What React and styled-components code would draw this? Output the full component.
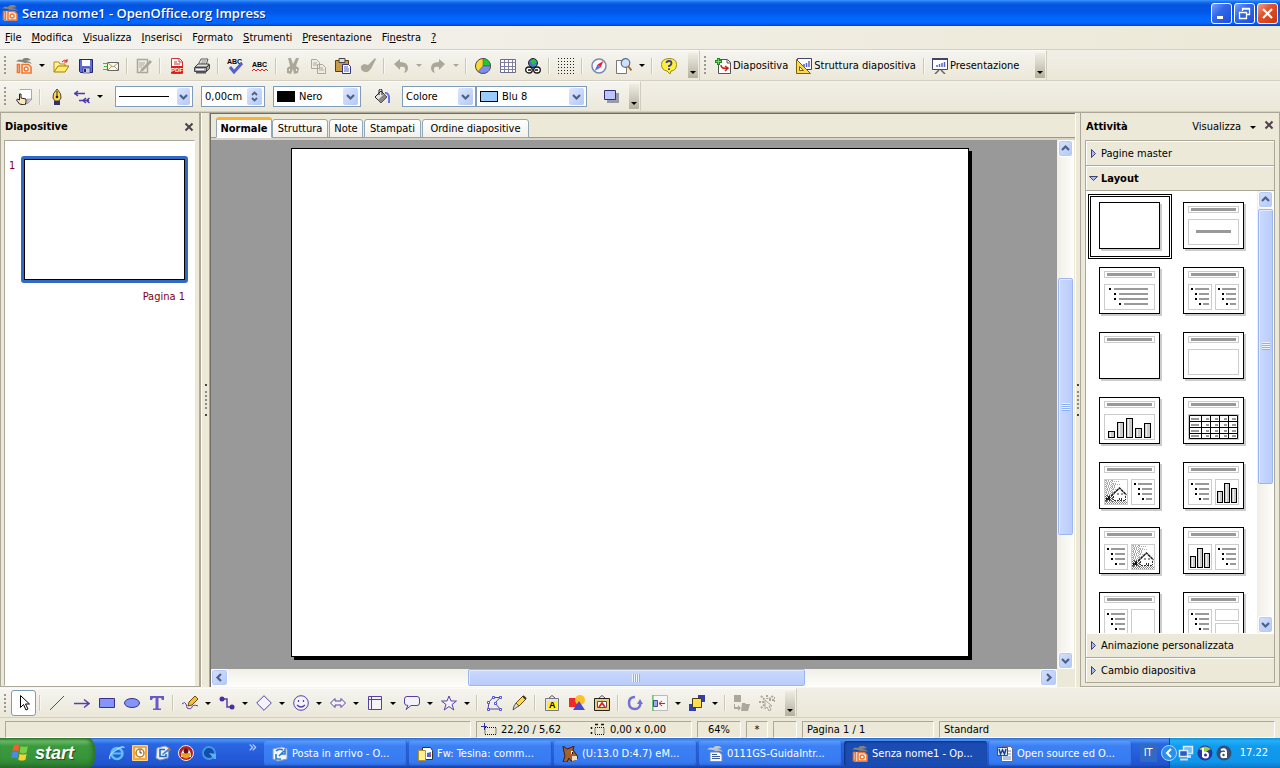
import React from "react";
import styled, { createGlobalStyle, css } from "styled-components";

const GlobalStyle = createGlobalStyle`
  *, *::before {
    box-sizing: border-box;
  }

  body {
    margin: 0;
    overflow: hidden;
    background: #ece9d8;
    color: #000;
    font-family: "DejaVu Sans Condensed", "Noto Sans", sans-serif;
    font-size: 11px;
    line-height: 14px;
  }

  button, input, select {
    margin: 0;
    padding: 0;
    border: 0;
    background: none;
    color: inherit;
    font: inherit;
  }

  svg {
    display: block;
    flex: none;
  }
`

const Window = styled.div`
  display: flex;
  flex-direction: column;
  height: 100vh;
  white-space: nowrap;
`

/* title bar */

const TitleBar = styled.header`
  display: flex;
  align-items: center;
  flex: none;
  height: 26px;
  padding: 0 2px;
  gap: 4px;
  background: linear-gradient(#3d95ff 0, #1a6ef0 2px, #0453dd 5px, #0257ea 12px, #0267ff 18px, #0268ff 23px, #0040d0 26px);
`

const Title = styled.h1`
  flex: 1;
  margin: 0;
  color: #fff;
  font-family: "Open Sans", sans-serif;
  font-size: 13px;
  font-weight: 600;
  line-height: 20px;
  text-shadow: 1px 1px 0 #0a2f8c;
`

const WindowButton = styled.button`
  display: grid;
  place-items: center;
  width: 21px;
  height: 21px;
  margin-left: -2px;
  border: 1px solid #fff;
  border-radius: 3px;
  background: ${p => p.$close
    ? "linear-gradient(135deg, #f0a088, #e0532c 40%, #c83810)"
    : "linear-gradient(135deg, #7ba2f5, #3468e8 40%, #1c4ddc)"};
`

/* menu */

const MenuBar = styled.nav`
  display: flex;
  align-items: center;
  flex: none;
  height: 24px;
  padding-top: 1px;
  border-bottom: 1px solid #d3cfc2;
  background: linear-gradient(90deg, #f3f2ee, #ede9d8);
`

const MenuItem = styled.a`
  padding: 0 5px;
  color: #000;
  text-decoration: none;

  u {
    text-underline-offset: 1px;
  }
`

/* toolbars */

const ToolbarRow = styled.div`
  display: flex;
  flex: none;
  height: ${p => p.$height || 31}px;
  border-bottom: 1px solid #d3cfc2;
  background: linear-gradient(#f1efe6, #ebe8d8);
`

const Toolbar = styled.div`
  display: flex;
  align-items: center;
  padding-right: 1px;
  border-right: 1px solid #d0ccbe;
  border-top: 1px solid #fbfaf7;
  background: linear-gradient(#f5f4ef, #ebe8d9);
`

const Grip = styled.span`
  width: 2px;
  height: 19px;
  margin: 0 5px 0 4px;
  background: repeating-linear-gradient(#9c998c 0 2px, transparent 2px 4px);
`

const ToolButton = styled.button`
  display: flex;
  align-items: center;
  justify-content: center;
  width: 25px;
  height: 26px;

  ${p => p.$pressed && css`
    border: 1px solid #7f9db9;
    border-radius: 3px;
    background: #fff;
  `}
`

const TextButton = styled(ToolButton)`
  width: auto;
  gap: 2px;
  padding: 0 4px;
`

const Arrow = styled.button`
  display: grid;
  place-items: center;
  width: 12px;
  height: 20px;

  &::before {
    content: "";
    border: 3px solid transparent;
    border-top-color: ${p => p.disabled ? "#aca899" : "#000"};
    border-bottom: 0;
  }
`

const Separator = styled.span`
  width: 2px;
  height: 16px;
  margin: 0 3px;
  border-left: 1px solid #cbc7b6;
  border-right: 1px solid #f8f7f2;
`

const ToolGap = styled.span`
  width: ${p => p.$width}px;
`

const Overflow = styled.button`
  display: flex;
  align-items: flex-end;
  justify-content: center;
  width: 10px;
  height: 25px;
  padding-bottom: 4px;
  margin-left: ${p => p.$gap || 6}px;
  background: linear-gradient(#efede2, #b4b1a0);

  &::before {
    content: "";
    border: 3px solid transparent;
    border-top-color: #000;
    border-bottom: 0;
  }
`

const Combo = styled.div`
  display: flex;
  align-items: center;
  width: ${p => p.$width}px;
  height: 21px;
  margin-left: ${p => p.$gap || 0}px;
  padding: 0 2px 0 3px;
  gap: 4px;
  border: 1px solid #7f9db9;
  background: #fff;

  select, input {
    flex: 1;
    min-width: 0;
    width: 0;
    appearance: none;
    outline: 0;
  }
`

const Swatch = styled.span`
  width: 18px;
  height: 11px;
  border: 1px solid #000;
  background: ${p => p.$color};
`

const StrokeSample = styled.span`
  width: 56px;
  height: 1px;
  background: #000;
`

const DropGlyph = styled.span`
  display: grid;
  place-items: center;
  width: 15px;
  height: 17px;
  border-radius: 2px;
  background: linear-gradient(135deg, #dce6fd, #b4c8f6);
`

/* document area */

const Main = styled.main`
  display: flex;
  flex: 1;
  min-height: 0;
  border-top: 1px solid #aca899;
  border-bottom: 1px solid #f6f5ee;
`

const SlidesPanel = styled.aside`
  display: flex;
  flex-direction: column;
  flex: none;
  width: 201px;
  padding: 0 4px 0 3px;
  border: 1px solid #aca899;
  border-width: 0 2px 1px 1px;
`

const PanelHeader = styled.div`
  display: flex;
  align-items: center;
  flex: none;
  height: 27px;
  padding: 1px 1px 0;
`

const PanelTitle = styled.h2`
  flex: 1;
  margin: 0;
  font-size: 11px;
  font-weight: bold;
  line-height: 14px;
`

const SlideList = styled.div`
  display: flex;
  flex: 1;
  align-items: flex-start;
  gap: 5px;
  padding: 15px 6px 0 4px;
  border: 1px solid #aca899;
  border-right-color: #fff;
  border-bottom-color: #fff;
  background: #fff;
  color: #800020;
`

const SlideNumber = styled.span`
  width: 7px;
  padding-top: 3px;
`

const SlideFigure = styled.figure`
  flex: 1;
  margin: 0;
  text-align: right;

  figcaption {
    padding: 7px 3px 0;
  }
`

const SlideThumb = styled.div`
  aspect-ratio: 168 / 128;
  border: 3px solid #316ac5;
  border-radius: 3px;

  &::before {
    content: "";
    display: block;
    height: 100%;
    border: 1px solid #000;
  }
`

const Splitter = styled.div`
  display: flex;
  flex-direction: column;
  align-items: center;
  justify-content: center;
  gap: 2px;
  flex: none;
  width: ${p => p.$width}px;
  border-left: 1px solid #fff;
  border-right: 1px solid #aca899;

  i {
    width: 2px;
    height: 2px;
    background: #8f8c7d;
  }

  i:first-child, i:last-child {
    margin: 3px 0;
    background: #444;
  }
`

const Editor = styled.section`
  display: flex;
  flex-direction: column;
  flex: 1;
  min-width: 0;
  border-left: 1px solid #716f64;
  border-top: 1px solid #716f64;
`

const TabStrip = styled.div`
  display: flex;
  align-items: flex-end;
  flex: none;
  height: 26px;
  padding-left: 5px;
  border-bottom: 2px solid #d8d5c8;
  box-shadow: inset 0 -1px #919b9c;
`

const Tab = styled.button`
  min-width: ${p => p.$width}px;
  height: 19px;
  margin-right: 1px;
  border: 1px solid #91a7b4;
  border-radius: 3px 3px 0 0;
  background: linear-gradient(#fff, #f1f0ea);

  ${p => p.$active && css`
    height: 21px;
    margin-right: 0;
    border-top: 3px solid #f9b52d;
    border-bottom-color: #fcfcfe;
    background: #fcfcfe;
    font-weight: bold;
    line-height: 13px;
  `}
`

const EditorBody = styled.div`
  display: grid;
  flex: 1;
  min-height: 0;
  grid-template: 1fr 18px / 1fr 18px;
`

const Canvas = styled.div`
  display: flex;
  padding: 8px 88px 12px 80px;
  background: #999;
`

const Slide = styled.div`
  flex: 1;
  border: 1px solid #000;
  background: #fff;
  box-shadow: 3px 3px 0 #000;
`

const ScrollTrack = styled.div`
  display: flex;
  flex-direction: ${p => p.$horizontal ? "row" : "column"};
  flex: none;
  ${p => p.$horizontal ? "height: 18px" : "width: 17px"};
  padding: ${p => p.$horizontal ? "0 0 1px" : "0 1px"};
  background: linear-gradient(${p => p.$horizontal ? "180deg" : "90deg"}, #f0eee6, #fefefb);
`

const ScrollButton = styled.button`
  display: grid;
  place-items: center;
  flex: none;
  width: ${p => p.$wide ? 17 : 15}px;
  height: 17px;
  border: 1px solid #fff;
  border-radius: 3px;
  background: linear-gradient(135deg, #d5e1fd, #b3c8f7);
  box-shadow: inset 0 0 0 1px #b5caf5;
`

const ScrollGap = styled.span`
  flex: ${p => p.$size} 1 0;
`

const ScrollThumb = styled.span`
  display: grid;
  place-items: center;
  flex: ${p => p.$size} 1 0;
  border: 1px solid #9ab5ef;
  border-radius: 2px;
  background: linear-gradient(${p => p.$horizontal ? "180deg" : "90deg"}, #cad8fd, #b9cdfa);
  box-shadow: inset 1px 1px #e3ebfe;

  &::before {
    content: "";
    width: 8px;
    height: 8px;
    background: repeating-linear-gradient(${p => p.$horizontal ? "90deg" : "180deg"}, #eef4fe 0 1px, #8cb0f8 1px 2px);
  }
`

/* task pane */

const TaskPane = styled.aside`
  display: flex;
  flex-direction: column;
  flex: none;
  width: 199px;
  padding: 0 4px 3px;
  border-right: 1px solid #aca899;
  border-bottom: 1px solid #aca899;
`

const PaneMenu = styled.button`
  margin-right: 6px;
`

const PaneClose = styled.div`
  margin-left: 5px;
`

const PaneBody = styled.div`
  display: flex;
  flex-direction: column;
  flex: 1;
  min-height: 0;
  border: 1px solid #aca899;
`

const PaneSection = styled.button`
  display: flex;
  align-items: center;
  gap: 3px;
  flex: none;
  height: 25px;
  padding: 1px 0 0 3px;
  border-bottom: 1px solid #aca899;
  background: #ece9d8;
  box-shadow: inset 1px 1px #fff;
  font-weight: ${p => p.$open ? "bold" : "normal"};

  &:last-child {
    height: 24px;
    border-bottom: 0;
  }
`

const LayoutArea = styled.div`
  display: flex;
  flex: 1;
  min-height: 0;
  background: #fff;
`

const LayoutGrid = styled.div`
  display: grid;
  flex: 1;
  grid-template-columns: 84px 84px;
  grid-auto-rows: 65px;
  align-content: start;
  padding: 3px 0 0 2px;
  overflow: hidden;
`

const LayoutButton = styled.button`
  display: grid;
  place-items: center;
  ${p => p.$selected && css`
    border: 3px double #000;
  `}
`

/* status bar */

const StatusBar = styled.footer`
  display: flex;
  flex: none;
  gap: 5px;
  height: 20px;
  padding: 3px 5px 0;
`

const StatusCell = styled.div`
  display: flex;
  align-items: center;
  justify-content: ${p => p.$center ? "center" : "flex-start"};
  flex: ${p => p.$grow || 0} 1 ${p => p.$width}px;
  gap: 4px;
  padding-left: ${p => p.$center ? 0 : 4}px;
  border: 1px solid #aca899;
  border-right-color: #fff;
  border-bottom-color: #fff;
`

const StatusGap = styled.span`
  flex: 1;
`

/* taskbar */

const Taskbar = styled.div`
  display: flex;
  flex: none;
  height: 30px;
  background: linear-gradient(#2a63cc 0, #4a93f4 2px, #2a66e2 6px, #2459d8 20px, #2156cf 26px, #1941a5 30px);
  color: #fff;
`

const StartButton = styled.button`
  display: flex;
  align-items: center;
  width: 96px;
  padding: 0 0 1px 10px;
  gap: 6px;
  border-radius: 0 8px 8px 0 / 0 15px 15px 0;
  background: linear-gradient(#2f7a32 0, #6cbb66 3px, #3c9a3e 8px, #38943a 20px, #2f8433 26px, #246a28 30px);
  box-shadow: inset -3px 0 4px #2b6f2e;
  font-family: "Liberation Sans", sans-serif;
  font-size: 18px;
  font-style: italic;
  font-weight: bold;
  line-height: 20px;
  text-shadow: 1px 1px 1px #1c4c1e;
`

const QuickLaunch = styled.div`
  display: flex;
  align-items: center;
  gap: 7px;
  width: 168px;
  padding: 0 7px 0 13px;
`

const More = styled.button`
  align-self: flex-start;
  flex: 1;
  padding-top: 2px;
  color: #bcd4ff;
  font-size: 16px;
  text-align: right;
`

const Tasks = styled.div`
  display: flex;
  flex: 1;
  gap: 2px;
  padding: 3px 0 2px;
`

const Task = styled.button`
  display: flex;
  align-items: center;
  flex: 0 1 143px;
  min-width: 0;
  padding: 0 12px 0 8px;
  gap: 4px;
  border-radius: 3px;
  background: ${p => p.$active ? "#1b4cb2" : "linear-gradient(#5a9bfb, #3c80f4 5px, #377bf2 20px, #2f6ce0)"};
  box-shadow: ${p => p.$active ? "inset 1px 1px 2px #102f78" : "inset -1px -1px 1px #2558c4"};

  span {
    overflow: hidden;
    text-overflow: ellipsis;
  }
`

const Language = styled.span`
  display: grid;
  place-items: center;
  align-self: center;
  width: 17px;
  height: 18px;
  margin-right: 4px;
  background: #316ac5;
`

const TrayToggle = styled.button`
  align-self: center;
  z-index: 1;
  margin-right: -8px;
`

const Tray = styled.div`
  display: flex;
  align-items: center;
  flex: none;
  gap: 3px;
  padding: 0 12px 0 8px;
  border-left: 1px solid #1042af;
  background: linear-gradient(#1290d8 0, #22b0f8 3px, #119bee 8px, #0f95ea 24px, #0f74c4 30px);
`

const Clock = styled.time`
  margin-left: 5px;
`

const P = "#5a3ea8";
const GREY = "#aca899";

const ICONS = {
  impress: <>
    <path d="M2 6h9l4 3v6.500H2z" fill="#fff4ea" />
    <path d="M0 3.500q3-3 6-1.500 2-3 6-2l3 2-5 1q4 0 6 3-4-2-7-1-4-2-9-1.500z" fill="#85827c" />
    <path d="M1.500 6.500h2v8h-2zM6 6.500h6.500l2.500 2.500v6H6z" fill="none" stroke="#ee7430" strokeWidth="1.600" />
    <ellipse cx="10.200" cy="11" rx="2" ry="2" fill="#fff" stroke="#ee7430" strokeWidth="1.400" />
  </>,
  open: <>
    <path d="M1 14V4h5l1 2h5v3" fill="#fff2a0" stroke="#b98c10" />
    <path d="M1 14l4-6h11l-4 6z" fill="#ffec70" stroke="#a67c08" />
    <path d="M9 4q2-3 5-1M14 1v3h-3" fill="none" stroke="#d02020" />
  </>,
  save: <>
    <path d="M1.500 1.500h13v13h-12l-1-1z" fill="#6070d8" stroke="#25256a" />
    <path d="M4 2h8v6H4z" fill="#fff" />
    <path d="M5 10h7v5H5z" fill="#c8cce8" stroke="#25256a" strokeWidth=".6" />
    <path d="M6 11h2v3H6z" fill="#25256a" />
  </>,
  mail: <>
    <path d="M4.500 4.500h11v8h-11z" fill="#fffbd8" stroke="#666" />
    <path d="M5 5l5 4 5-4M5 12l4-4M15 12l-4-4" fill="none" stroke="#888" strokeWidth=".8" />
    <path d="M0 5.500h5M1 8.500h4M0 11.500h4" stroke="#30c030" />
  </>,
  edit: <>
    <path d="M1.500 1.500h10v13h-10z" fill="#eeece2" stroke={GREY} strokeWidth="1.500" />
    <path d="M3 5h6M3 7h5M3 9h3" stroke={GREY} />
    <path d="M14 2l2 2-9 9-3 1 1-3z" fill={GREY} />
  </>,
  pdf: <>
    <path d="M2.500.5h8l3 3v12h-11z" fill="#fff" stroke="#c33" />
    <path d="M10 1v3h3M5 4h3M5 6h6" fill="none" stroke="#c33" />
    <path d="M2 8h12v7H2z" fill="#d81e1e" />
    <text x="2" y="14" fontSize="6" fontWeight="bold" fill="#fff" fontFamily="Liberation Sans">PDF</text>
  </>,
  print: <>
    <path d="M4 7l3-6h7l-2 6" fill="#fff" stroke="#555" />
    <path d="M7.500 3h5M6.500 5h5" stroke="#777" />
    <path d="M1 9l3-3h11l-2 3z" fill="#e4e4e4" stroke="#444" />
    <path d="M.5 9.500h12v4H.5zM12.500 9.500l3-3v4l-3 3z" fill="#a8a8ae" stroke="#444" />
    <path d="M2 11.500h8" stroke="#fff" />
    <path d="M2 14.500h10" stroke="#555" strokeWidth="2" />
  </>,
  spell: <>
    <text x="0" y="6" fontSize="7" fontWeight="bold" fontFamily="Liberation Sans">ABC</text>
    <path d="M3 9l4 5 8-9" fill="none" stroke="#5560d0" strokeWidth="3" />
  </>,
  autospell: <>
    <text x="0" y="9" fontSize="7" fontWeight="bold" fontFamily="Liberation Sans">ABC</text>
    <path d="M0 13l2-2 2 2 2-2 2 2 2-2 2 2 2-2 2 2" fill="none" stroke="#e02020" />
  </>,
  cut: <>
    <path d="M3 0l3 0 2 6 3-6 3 0-3 8 3 2-1 5-4 1-1-5-2 5-4-1 0-5 3-2z" fill={GREY} />
    <path d="M4 12h1M11 12h1" stroke="#f2f0e8" strokeWidth="2" />
  </>,
  copy: <>
    <path d="M1.500 1.500h5l3 3v6h-8zM7.500 6.500h5l3 3v6h-8z" fill="#efede3" stroke={GREY} />
    <path d="M3 5h4M3 7h4M9 10h4M9 12h5" stroke={GREY} />
  </>,
  paste: <>
    <path d="M.5 2.500h13v11H.5z" fill="#c99a40" stroke="#5b3c0a" />
    <path d="M4 .5h6v4H4z" fill="#ddd" stroke="#444" />
    <path d="M7.500 6.500h6l2 2v7h-8z" fill="#fff" stroke="#35357a" />
    <path d="M9 9h4M9 11h5M9 13h5" stroke="#5560c0" />
  </>,
  brush: <path d="M15 0l1 1-4 8q-3 6-7 5-5-1-4-6l3-2 4 1z" fill={GREY} />,
  undo: <path d="M1 6l6-5v3q8 0 8 6 0 4-4 5 2-3 1-5-1-2-5-1v3z" fill={GREY} />,
  redo: <path d="M15 6L9 1v3Q1 4 1 10q0 4 4 5-2-3-1-5 1-2 5-1v3z" fill={GREY} />,
  chart: <>
    <circle cx="8" cy="8" r="7.500" fill="#ffd830" stroke="#444" />
    <path d="M8 8V.5A7.500 7.500 0 0 1 15.500 8z" fill="#20c838" stroke="#444" strokeWidth=".5" />
    <path d="M8 8h7.500A7.500 7.500 0 0 1 3 13.500z" fill="#7d8cf0" stroke="#444" strokeWidth=".5" />
  </>,
  table: <>
    <path d="M.5 1.500h15v13H.5z" fill="#fff" stroke="#6a6a8c" />
    <path d="M0 4.500h16M0 8.500h16M0 11.500h16M4.500 2v12M8.500 2v12M12.500 2v12" stroke="#8080a0" />
  </>,
  link: <>
    <circle cx="8" cy="5" r="4.500" fill="#4a6ae0" stroke="#222" />
    <path d="M5 3l4-2 3 3-4 3zM8 7l3-1v2z" fill="#20c838" />
    <ellipse cx="4" cy="12" rx="3.300" ry="3" fill="#fff" stroke="#111" strokeWidth="1.300" />
    <ellipse cx="12" cy="12" rx="3.300" ry="3" fill="#fff" stroke="#111" strokeWidth="1.300" />
    <path d="M3 12h3M10 12h3" stroke="#111" strokeWidth="1.500" />
  </>,
  grid: <>
    {[0, 3, 6, 9, 12, 15].map(y => (
      <path key={y} d={`M0 ${y + 0.5}h16`} stroke="#222" strokeDasharray="1 2" />
    ))}
  </>,
  compass: <>
    <circle cx="8" cy="8" r="7" fill="#f6f8ff" stroke="#7e88a8" strokeWidth="1.500" />
    <path d="M12.500 3L9.500 9.500l-3-3z" fill="#f02020" />
    <path d="M3.500 13l3-6.500 3 3z" fill="#5a6ee0" />
  </>,
  zoom: <>
    <path d="M.5 2.500h8l2 2v11H.5z" fill="#fff" stroke="#777" />
    <circle cx="9.500" cy="5" r="4.300" fill="#c9e1fb" stroke="#5a6a98" strokeWidth="1.200" />
    <path d="M12 8l3.500 4.500" stroke="#a86a20" strokeWidth="2" />
  </>,
  help: <>
    <path d="M8 .5q7.500 0 7.500 6T10 13l-1 3-3-3Q.5 12 .5 6.500T8 .5z" fill="#fff03a" stroke="#998a20" />
    <path d="M5.500 5q0-2 2.500-2t2.500 2T8 8v1M8 10.200v1.800" fill="none" stroke="#3a3aa0" strokeWidth="1.800" />
  </>,
  newSlide: <>
    <path d="M3.500 1.500h9l3 3v11h-12z" fill="#fff" stroke="#555" />
    <path d="M12 2v3h3" fill="none" stroke="#555" />
    <path d="M6 7q0 4 6 3M10 8l3 2-3 3" fill="none" stroke="#d01c1c" strokeWidth="1.500" />
    <path d="M0 3.500h7M3.500 0v7" stroke="#208a20" strokeWidth="3" />
    <path d="M1 3.500h5M3.500 1v5" stroke="#60e060" />
  </>,
  design: <>
    <path d="M1.500.5h14v11h-14z" fill="#fff" stroke="#44446a" />
    <path d="M8 9V6M10.500 9V5M13 9V3" stroke="#5960d8" strokeWidth="1.500" />
    <path d="M.5 1.500v14h14z" fill="#ffd84a" stroke="#7a6010" />
    <path d="M3.500 8.500v4h4z" fill="#fff" stroke="#7a6010" />
  </>,
  present: <>
    <path d="M.5.5h15v11H.5z" fill="#fff" stroke="#44446a" />
    <path d="M0 1h16" stroke="#44446a" strokeWidth="2" />
    <path d="M5 9V7M7.500 9V6M10 9V5M12.500 9V4" stroke="#5960d8" strokeWidth="1.500" />
    <path d="M7 12l-4 4M9 12l4 4" stroke="#666" strokeWidth="1.500" />
  </>,
  hand: <>
    <path d="M3.500.5h12v10l-4 4h-6" fill="#fff" stroke="#aaa" />
    <path d="M11 15v-5h5z" fill="#ccc" stroke="#888" strokeWidth=".6" />
    <path d="M3.500 15l-3-4 1-1 2 1V5h1.500v4l5 1v3l-1 3z" fill="#ffe8c0" stroke="#222" />
  </>,
  pen: <>
    <path d="M8 0q5 5 4 9l-2 3H6L4 9Q3 5 8 0z" fill="#ffd84a" stroke="#444" />
    <path d="M8 2v6" stroke="#222" />
    <circle cx="8" cy="8" r="1.300" fill="#222" />
    <path d="M5 12h6v4H5z" fill="#30306a" />
  </>,
  lineEnds: <path d="M0 4.500h11M4 2L1 4.500 4 7M5 11.500h10M12 9l-3 2.500 3 2.500M15.500 9l-3 2.500 3 2.500" fill="none" stroke="#4a3aa8" strokeWidth="1.500" />,
  bucket: <>
    <path d="M1 8l6-6 6 6-6 6z" fill="#e4e4e6" stroke="#222" />
    <path d="M4 11l6-6 3 3-6 6z" fill="#888" />
    <path d="M5 6V1q2-2 3 0v5" fill="none" stroke="#222" />
    <path d="M11 4q5-1 4 10" fill="none" stroke="#6070f0" strokeWidth="2" />
  </>,
  shadow: <>
    <path d="M4 4h12v10H4z" fill="#9a9aa6" />
    <path d="M1.500 1.500h11v9h-11z" fill="#bcc6fa" stroke="#30307a" />
  </>,
  pointer: <path d="M4.500.5v12l3-3 2.500 5.500 2-1-2.500-5h4z" fill="#fff" stroke="#000" />,
  line: <path d="M1 15L15 1" stroke={P} />,
  arrow: <path d="M0 8.500h14M10 4.500l5 4-5 4" fill="none" stroke={P} strokeWidth="1.500" />,
  rect: <path d="M.5 3.500h15v9H.5z" fill="#8495f8" stroke="#3e2c90" />,
  ellipse: <ellipse cx="8" cy="8" rx="7.500" ry="4.500" fill="#8495f8" stroke="#3e2c90" />,
  text: <path d="M1 1h14v4h-2l-1-2H9.500v10.500H12V15H4v-1.500h2.500V3H4L3 5H1z" fill="#6a5ac8" />,
  curve: <>
    <path d="M0 9q3-3 4 0t1 4q4 2 5-1t6-1" fill="none" stroke={P} />
    <path d="M6 11l1-4 6-6 3 3-6 6z" fill="#f6c03a" stroke="#6a4a10" />
  </>,
  connector: <>
    <path d="M3 4h5v8h5" fill="none" stroke={P} strokeWidth="1.500" />
    <circle cx="3" cy="4" r="2.500" fill="#4a2e9e" />
    <circle cx="13" cy="12" r="2.500" fill="#4a2e9e" />
  </>,
  diamond: <path d="M8 .7L15.300 8 8 15.300.7 8z" fill="#f4f3fa" stroke={P} />,
  smile: <>
    <circle cx="8" cy="8" r="7.300" fill="#f4f3fa" stroke={P} />
    <path d="M5.500 5v2M10.500 5v2M4 10q4 4 8 0" fill="none" stroke={P} strokeWidth="1.200" />
  </>,
  block: <path d="M.5 8L5 3.500v2.500h6V3.500L15.500 8 11 12.500V10H5v2.500z" fill="#f4f3fa" stroke={P} />,
  flow: <path d="M1.500 1.500h13v13h-13zM1 4.500h14M4.500 1v14" fill="#f4f3fa" stroke={P} />,
  callout: <path d="M3 1.500h10q2.500 0 2.500 2.500v4q0 2.500-2.500 2.500H7l-5 4 2-4Q.5 10.500.5 8V4Q.5 1.500 3 1.500z" fill="#f4f3fa" stroke={P} />,
  star: <path d="M8 1l2 5h5.500L11 9.500l1.800 5.500L8 11.500 3.200 15 5 9.500.5 6H6z" fill="#f4f3fa" stroke={P} />,
  points: <>
    <path d="M7 2.500h7L9 8l5 6H2l1-7z" fill="none" stroke={P} />
    {[[6, 1], [13, 1], [8, 7], [13, 13], [1, 13], [1, 6]].map(([x, y]) => (
      <path key={`${x}-${y}`} d={`M${x}.500 ${y}.500h2v2h-2z`} fill="#fff" stroke="#4858e0" />
    ))}
  </>,
  glue: <>
    <path d="M5 8l7-7 3 3-7 7z" fill="#ffd84a" stroke="#6a4a10" />
    <path d="M5 8l3 3-2 1-4 3 1-4z" fill="#ddd" stroke="#555" />
    <path d="M12 1l3 3" stroke="#333" strokeWidth="2" />
  </>,
  fontwork: <>
    <path d="M5 3l3-2.500L11 3" fill="none" stroke="#555" />
    <path d="M1.500 3.500h13v12h-13z" fill="#e6e6ea" stroke="#778" />
    <path d="M3 6h10v8H3z" fill="#ffee20" />
    <text x="5" y="13" fontSize="9" fontWeight="bold" fontFamily="Liberation Sans">A</text>
  </>,
  shapes: <>
    <path d="M0 3h9v9H0z" fill="#f02828" />
    <circle cx="11" cy="5" r="5" fill="#ffbf28" />
    <path d="M10 6l6 9H4z" fill="#4a4ac8" />
  </>,
  picture: <>
    <path d="M5 3l3-2.500L11 3" fill="none" stroke="#555" />
    <path d="M.5 3.500h15v12H.5z" fill="#e8d080" stroke="#222" />
    <path d="M3.500 6.500h9v6h-9z" fill="#fff" stroke="#555" />
    <path d="M5 12l3-4 3 4" fill="none" stroke="#e02020" strokeWidth="1.800" />
  </>,
  rotate: <>
    <path d="M8 2Q2 2 2 8t6 6q5 0 5.500-6" fill="none" stroke="#7470d4" strokeWidth="2.500" />
    <path d="M10 9l3-5 3 5z" fill="#7470d4" />
  </>,
  align: <>
    <path d="M.5.5h15v15H.5z" fill="#f6f6f4" stroke="#bbb" />
    <path d="M1 0v16" stroke="#20d030" />
    <path d="M1.500 5.500h4v6h-4z" fill="#9aa8f8" stroke="#444a90" />
    <path d="M7 8.500h6M10 6L7 8.500 10 11" fill="none" stroke="#d02020" />
  </>,
  arrange: <>
    <path d="M9 0h7v7H9zM0 9h7v7H0z" fill="#3040b0" />
    <path d="M3.500 3.500h9v9h-9z" fill="#ffdf50" stroke="#4a3a10" />
  </>,
  extrude: <path d="M0 0h7v7H0zM8 8h3l1 1h4l-2 7H7zM1 9v3h3v-2l3 3-3 3v-2H0V9z" fill={GREY} />,
  interact: <>
    <path d="M8 0v4M2 1l4 4M14 1l-4 3M0 7h5M2 13l4-4M10 5h6M16 2v6" stroke={GREY} strokeWidth="2" strokeDasharray="2 1" />
    <path d="M6 5l7 6H10l2 4-2 1-2-4-2 2z" fill="#f0eee4" stroke={GREY} />
  </>,
  posDim: <>
    <path d="M0 4.500h6M3.500 1v7" stroke="#3535a0" />
    <path d="M4 5.500h11v7H4z" fill="none" stroke="#111" strokeDasharray="1 1" />
  </>,
  sizeDim: <>
    <path d="M5 5.500h9v7H5z" fill="none" stroke="#111" strokeDasharray="1 1" />
    <path d="M5 2.500h3M11 2.500h3M1.500 5v2M1.500 10v2" stroke="#111" strokeWidth="1.500" />
  </>,
  windows: <>
    <path d="M3 2q3-2 5 0L7 7Q4 5.500 2 7z" fill="#f0602a" />
    <path d="M9 2.500q3 1.500 6 0L14 8q-3 1.500-6 0z" fill="#7bd040" />
    <path d="M2 8q2-1.500 5 0l-1 5q-3-1.500-5 0z" fill="#4a8af0" />
    <path d="M8 9q3 1.500 6 0l-1 5q-3 1.500-6 0z" fill="#fbd030" />
  </>,
  ie: <>
    <circle cx="8" cy="8.500" r="5.500" fill="none" stroke="#5cc0fa" strokeWidth="2.500" />
    <path d="M4 8.500h9" stroke="#5cc0fa" strokeWidth="2" />
    <path d="M1 14q-2-4 6-9t8-2" fill="none" stroke="#a6def8" strokeWidth="1.300" />
  </>,
  outlook: <>
    <path d="M.5.5h15v15H.5z" fill="#f6a83a" stroke="#ffd898" />
    <path d="M3 3h10v10H3z" fill="#fff5dc" />
    <circle cx="8" cy="8" r="4" fill="#fff" stroke="#c07818" strokeWidth="1.500" />
    <path d="M8 5v3h2" fill="none" stroke="#604010" />
  </>,
  desktop: <>
    <path d="M2 3l8-2 4 2-1 10-8 2-4-2z" fill="#e6f0fc" stroke="#8898b8" />
    <path d="M10 4.500H5v7h6V9" fill="none" stroke="#2468b8" strokeWidth="1.600" />
    <path d="M7 9l1 1 7-5-1-2z" fill="#3a86d8" />
    <path d="M13 3l3 1-1 2-2-1z" fill="#e86820" />
  </>,
  messenger: <>
    <circle cx="8" cy="8" r="7.500" fill="#b82020" stroke="#eee" />
    <path d="M3 12q0-8 5-8t5 8z" fill="#fff" />
    <path d="M3 10q5 7 10 0l-1-2H4z" fill="#f0a020" />
    <circle cx="8" cy="6" r="2.500" fill="#5a1818" />
  </>,
  quicktime: <>
    <circle cx="8" cy="8" r="6" fill="#144ca8" stroke="#3f98e8" strokeWidth="1.800" />
    <path d="M8 8l5 6h2V9z" fill="#5cb0f8" />
  </>,
  outbox: <>
    <path d="M1 3l9-2 5 2v10l-9 2-5-2z" fill="#f4f6fc" stroke="#8aa0c0" />
    <path d="M4 5q3-3 7-1M13 3v5H9M12 5l-5 5M4 8v5h5" fill="none" stroke="#2a7ad0" strokeWidth="1.600" />
  </>,
  letter: <>
    <path d="M5.500 1.500h8l2 3v9h-10z" fill="#fff" stroke="#333" />
    <path d="M1.500 4.500h7v10h-7z" fill="#fff19a" stroke="#b8901a" />
    <path d="M10 7l4-1v5h-4z" fill="#4068d8" />
    <path d="M12 7h2v2h-2z" fill="#e05030" />
  </>,
  mule: <>
    <path d="M1 0l4 3 3-1 4-2-1 4 3 4 2 3-2 3-5 1-2-3-2 4H1l2-6-1-4z" fill="#a8602a" stroke="#3c1e0a" />
    <path d="M10 10l5 0 0 4-5 1z" fill="#f0dcc0" />
    <path d="M9 5h2v3H9z" fill="#fff" />
    <path d="M10 6h1v2h-1z" fill="#111" />
  </>,
  writer: <>
    <path d="M3 6h9l3 2.500V15.500H3z" fill="#f5f8ff" stroke="#7a8aaa" />
    <path d="M0 3.500q3-3 6-1.500 2-3 6-2l3 2-5 1q4 0 6 3-4-2-7-1-4-2-9-1.500z" fill="#c4c6c8" />
    <path d="M5 8.500h5M5 10.500h8M5 12.500h8" stroke="#3e5c98" />
  </>,
  word: <>
    <path d="M4.500.5h9l2 2v13h-11z" fill="#fff" stroke="#668" />
    <path d="M10 5h4M10 8h4M6 11h8M6 13h8" stroke="#7088b8" />
    <path d="M.5 1.500h10v8H.5z" fill="#dfe9fc" stroke="#2450a0" />
    <path d="M2 3l1.500 5 2-4 2 4L9 3" fill="none" stroke="#16408e" strokeWidth="1.500" />
  </>,
  trayArrow: <>
    <circle cx="8" cy="8" r="7.500" fill="#2a90f0" stroke="#a8d8fc" />
    <path d="M10 4L6 8l4 4" fill="none" stroke="#fff" strokeWidth="2" />
  </>,
  network: <>
    <path d="M5.500 1.500h9v7h-9z" fill="#6ac0f8" stroke="#e0e8f0" strokeWidth="1.500" />
    <path d="M9 10h4v3H9z" fill="#d0d8e0" />
    <path d="M1.500 5.500h8v6h-8z" fill="#2a5ac8" stroke="#e0e8f0" strokeWidth="1.500" />
    <path d="M2 14.500h8" stroke="#d0d8e0" strokeWidth="2" />
  </>,
  bTray: <>
    <circle cx="8" cy="8" r="7.500" fill="#2438a0" />
    <path d="M2 4Q8-1 14 4L8 7z" fill="#9ad040" />
    <path d="M6 3v9" stroke="#fff" strokeWidth="2" />
    <circle cx="8.500" cy="10" r="2.500" fill="none" stroke="#fff" strokeWidth="2" />
  </>,
  aTray: <>
    <circle cx="8" cy="8" r="7.500" fill="#345078" />
    <path d="M5 5q5-2 5 2v6" fill="none" stroke="#fff" strokeWidth="2" />
    <circle cx="7.500" cy="10" r="2.200" fill="none" stroke="#fff" strokeWidth="2" />
  </>,
};

function Icon({ name, size = 16 }) {
  return <svg width={size} height={size} viewBox="0 0 16 16" aria-hidden="true">{ICONS[name]}</svg>
}

const CHEVRONS = {
  up: "M1 6l3.500-3.500L8 6",
  down: "M1 3l3.500 3.500L8 3",
  left: "M6 1L2.500 4.500 6 8",
  right: "M3 1l3.500 3.500L3 8",
};

function Chevron({ dir = "down" }) {
  return (
    <svg width="9" height="9" viewBox="0 0 9 9" aria-hidden="true">
      <path d={CHEVRONS[dir]} fill="none" stroke="#4d6185" strokeWidth="2.200" />
    </svg>
  )
}

function Triangle({ open }) {
  return (
    <svg width="9" height="9" viewBox="0 0 9 9" aria-hidden="true">
      <path d={open ? "M.5 2.500h8l-4 4z" : "M2.500.5v8l4-4z"} fill="#aab8f8" stroke="#404078" />
    </svg>
  )
}

function Close() {
  return (
    <button aria-label="Chiudi">
      <svg width="10" height="10" viewBox="0 0 10 10">
        <path d="M1.500 1.500l7 7M8.500 1.500l-7 7" stroke="#50404e" strokeWidth="2" />
      </svg>
    </button>
  )
}

// "|" is a separator, ":v" adds a drop-down arrow, "!" disables it, ":p" is pressed
function Tools({ items }) {
  return items.split(" ").map((item, i) => {
    if (item === "|") return <Separator key={i} />
    const [name, flags = ""] = item.split(":");
    return (
      <React.Fragment key={i}>
        <ToolButton aria-label={name} $pressed={flags.includes("p")}><Icon name={name} /></ToolButton>
        {flags.includes("v") && <Arrow aria-label={`${name} menu`} disabled={flags.includes("!")} />}
      </React.Fragment>
    )
  })
}

function Scrollbar({ before, thumb, after, horizontal }) {
  return (
    <ScrollTrack $horizontal={horizontal}>
      <ScrollButton $wide={horizontal} aria-label="Indietro"><Chevron dir={horizontal ? "left" : "up"} /></ScrollButton>
      <ScrollGap $size={before} />
      <ScrollThumb $size={thumb} $horizontal={horizontal} />
      <ScrollGap $size={after} />
      <ScrollButton $wide={horizontal} aria-label="Avanti"><Chevron dir={horizontal ? "right" : "down"} /></ScrollButton>
    </ScrollTrack>
  )
}

function Select({ label, value, width, gap, children }) {
  return (
    <Combo $width={width} $gap={gap}>
      {children}
      <select aria-label={label} defaultValue={value}>
        <option>{value}</option>
      </select>
      <DropGlyph><Chevron /></DropGlyph>
    </Combo>
  )
}

/* layout previews, drawn on a 63x49 sheet */

const Frame = ({ x = 5, y = 17, w = 51, h = 26 }) => (
  <rect x={x + 0.5} y={y + 0.5} width={w - 1} height={h - 1} fill="#fff" stroke="#ccc" />
)

const Bullets = ({ x = 5 }) => (
  <>
    <Frame x={x} w={24} />
    {[[3, 21], [7, 26], [7, 31], [11, 36]].map(([dx, y]) => (
      <React.Fragment key={y}>
        <rect x={x + dx} y={y} width="2" height="2" />
        <rect x={x + dx + 4} y={y} width={17 - dx} height="2" fill="#999" />
      </React.Fragment>
    ))}
  </>
)

const Bars = ({ bars, width = 7 }) => bars.map(([x, h]) => (
  <g key={x}>
    <rect x={x + 0.5} y={41.5 - h} width={width - 1} height={h - 1} fill="#ccc" stroke="#000" />
    <path d={`M${x + 2.5} ${42 - h}v${h - 2}`} stroke="#eee" />
  </g>
))

const SmallChart = ({ x }) => (
  <>
    <Frame x={x} w={24} />
    <Bars width={6} bars={[[x + 2, 12], [x + 9, 20], [x + 16, 15]]} />
  </>
)

const House = ({ x }) => (
  <>
    <Frame x={x} w={24} />
    <g transform={`translate(${x} 17)`}>
      {[...Array(22)].map((_, y) => (
        <path
          key={y}
          d={`M${1 + (y % 2)} ${y + 1.5}h${[9, 14, 8, 12, 15, 10, 12, 9][y % 8]}`}
          stroke={y > 14 ? "#666" : "#aaa"}
          strokeDasharray={y % 3 ? "1 1" : "2 1 1 2"}
        />
      ))}
      <path d="M9 22v-6l6.500-6 6.500 6v6z" fill="#fff" />
      <path d="M7 17l8.500-8 7 7" fill="none" stroke="#222" strokeWidth="1.500" strokeDasharray="3 .5" />
      <path d="M9.500 17v4M21.500 17v4M10 21.500h11M15.500 21v-3M17.500 21v-3M13 15h2M17 15h2" fill="none" stroke="#333" strokeDasharray="2 1" />
      <path d="M2 22l1-3 1 2 1-4 1 5" fill="none" stroke="#000" />
      <path d="M1 22.500h22M2 23.500h21M1 24.500h22" stroke="#888" strokeDasharray="1 1" />
    </g>
  </>
)

const LAYOUTS = [
  { name: "Vuota", plain: true },
  { name: "Titolo", body: <><Frame /><rect x="13" y="28" width="35" height="3" fill="#999" /></> },
  {
    name: "Titolo, testo",
    body: <>
      <Frame />
      {[[10, 21], [15, 26], [15, 31], [20, 36]].map(([x, y]) => (
        <React.Fragment key={y}>
          <rect x={x} y={y} width="2" height="2" />
          <rect x={x + 5} y={y} width={44 - x} height="2" fill="#999" />
        </React.Fragment>
      ))}
    </>,
  },
  { name: "Titolo, due testi", body: <><Bullets /><Bullets x={32} /></> },
  { name: "Solo titolo" },
  { name: "Titolo, oggetto", body: <Frame /> },
  { name: "Titolo, diagramma", body: <><Frame /><Bars bars={[[9, 7], [18, 16], [27, 20], [36, 10], [45, 15]]} /></> },
  {
    name: "Titolo, tabella",
    body: <>
      <Frame />
      <path d="M6.500 18.500h48v23h-48zM6 24.500h49M6 30.500h49M6 36.500h49M18.500 18v24M27.500 18v24M36.500 18v24M45.500 18v24" fill="none" stroke="#000" />
      {[21, 27, 33, 38].map(y => (
        <path key={y} d={`M8 ${y + 1}h8M23 ${y + 1}h3M32 ${y + 1}h3M41 ${y + 1}h3M49 ${y + 1}h4`} stroke="#999" strokeWidth="2" />
      ))}
    </>,
  },
  { name: "Titolo, clipart, testo", body: <><House x={5} /><Bullets x={32} /></> },
  { name: "Titolo, testo, diagramma", body: <><Bullets /><SmallChart x={32} /></> },
  { name: "Titolo, testo, clipart", body: <><Bullets /><House x={32} /></> },
  { name: "Titolo, diagramma, testo", body: <><SmallChart x={5} /><Bullets x={32} /></> },
  { name: "Titolo, testo, oggetto", body: <><Bullets /><Frame x={32} w={24} /></> },
  { name: "Titolo, testo, due oggetti", body: <><Bullets /><Frame x={32} w={24} h={12} /><Frame x={32} y={31} w={24} h={12} /></> },
];

function LayoutPreview({ plain, body }) {
  return (
    <svg width="63" height="49" viewBox="0 0 63 49" aria-hidden="true">
      <rect x="2" y="2" width="61" height="47" fill="#ccc" />
      <rect x=".5" y=".5" width="60" height="46" fill="#fff" stroke="#000" />
      {!plain && <><Frame y={4} h={7} /><rect x="8" y="6" width="45" height="3" fill="#999" /></>}
      {body}
    </svg>
  )
}

const MENU = [
  ["", "F", "ile"], ["", "M", "odifica"], ["", "V", "isualizza"], ["", "I", "nserisci"], ["F", "o", "rmato"],
  ["", "S", "trumenti"], ["", "P", "resentazione"], ["Fi", "n", "estra"], ["", "?", ""],
];

const TABS = [["Normale", 56], ["Struttura", 56], ["Note", 34], ["Stampati", 57], ["Ordine diapositive", 107]];

const TASKS = [
  ["outbox", "Posta in arrivo - O..."], ["letter", "Fw: Tesina: comm..."], ["mule", "(U:13.0 D:4.7) eM..."],
  ["writer", "0111GS-GuidaIntr..."], ["impress", "Senza nome1 - Op..."], ["word", "Open source ed O..."],
];

const GripDots = () => [...Array(7)].map((_, i) => <i key={i} />)

export default function App() {
  return (
    <Window>
      <GlobalStyle />
      <TitleBar>
        <Icon name="impress" />
        <Title>Senza nome1 - OpenOffice.org Impress</Title>
        <WindowButton aria-label="Riduci a icona">
          <svg width="13" height="13"><path d="M2 10.500h6" stroke="#fff" strokeWidth="3" /></svg>
        </WindowButton>
        <WindowButton aria-label="Ripristina">
          <svg width="13" height="13">
            <path d="M1.500 5.500h7v6h-7zM1 5.500h8M4.500 4V1.500h7v6H9M4 2h8" fill="none" stroke="#fff" strokeWidth="1.300" />
          </svg>
        </WindowButton>
        <WindowButton $close aria-label="Chiudi finestra">
          <svg width="13" height="13"><path d="M2 2l9 9M11 2l-9 9" stroke="#fff" strokeWidth="2.200" /></svg>
        </WindowButton>
      </TitleBar>

      <MenuBar>
        {MENU.map(([pre, key, post]) => (
          <MenuItem key={post} href="#">{pre}<u>{key}</u>{post}</MenuItem>
        ))}
      </MenuBar>

      <ToolbarRow>
        <Toolbar>
          <Grip />
          <Tools items="impress:v open save mail | edit | pdf print | spell autospell | cut copy paste brush | undo:v! redo:v! | chart table link | grid | compass zoom:v | help" />
          <Overflow aria-label="Altro" $gap={7} />
        </Toolbar>
        <Toolbar>
          <Grip />
          <TextButton><Icon name="newSlide" />Diapositiva</TextButton>
          <TextButton><Icon name="design" />Struttura diapositiva</TextButton>
          <Separator />
          <TextButton><Icon name="present" />Presentazione</TextButton>
          <Overflow aria-label="Altro" $gap={12} />
        </Toolbar>
      </ToolbarRow>

      <ToolbarRow>
        <Toolbar>
          <Grip />
          <Tools items="hand | pen lineEnds:v" />
          <Select label="Stile linea" value="" width={78} gap={9}><StrokeSample /></Select>
          <Combo $width={64} $gap={8}>
            <input aria-label="Larghezza linea" defaultValue="0,00cm" />
            <DropGlyph>
              <svg width="9" height="11"><path d="M2 4l2.500-2.500L7 4M2 7l2.500 2.500L7 7" fill="none" stroke="#4d6185" strokeWidth="1.800" /></svg>
            </DropGlyph>
          </Combo>
          <Select label="Colore linea" value="Nero" width={88} gap={8}><Swatch $color="#000" /></Select>
          <ToolGap $width={8} />
          <Tools items="bucket" />
          <Select label="Stile area" value="Colore" width={74} gap={8} />
          <Select label="Riempimento" value="Blu 8" width={111}><Swatch $color="#99ccff" /></Select>
          <ToolGap $width={11} />
          <Tools items="shadow" />
          <Overflow aria-label="Altro" />
        </Toolbar>
      </ToolbarRow>

      <Main>
        <SlidesPanel>
          <PanelHeader>
            <PanelTitle>Diapositive</PanelTitle>
            <Close />
          </PanelHeader>
          <SlideList>
            <SlideNumber>1</SlideNumber>
            <SlideFigure>
              <SlideThumb />
              <figcaption>Pagina 1</figcaption>
            </SlideFigure>
          </SlideList>
        </SlidesPanel>
        <Splitter $width={9}><GripDots /></Splitter>

        <Editor>
          <TabStrip role="tablist">
            {TABS.map(([label, width], i) => (
              <Tab key={label} role="tab" $width={width} $active={i === 0}>{label}</Tab>
            ))}
          </TabStrip>
          <EditorBody>
            <Canvas><Slide /></Canvas>
            <Scrollbar before={121} thumb={257} after={117} />
            <Scrollbar horizontal before={241} thumb={336} after={236} />
          </EditorBody>
        </Editor>

        <Splitter $width={6}><GripDots /></Splitter>
        <TaskPane>
          <PanelHeader>
            <PanelTitle>Attività</PanelTitle>
            <PaneMenu>Visualizza</PaneMenu>
            <Arrow aria-label="Visualizza menu" />
            <PaneClose><Close /></PaneClose>
          </PanelHeader>
          <PaneBody>
            <PaneSection><Triangle />Pagine master</PaneSection>
            <PaneSection $open><Triangle open />Layout</PaneSection>
            <LayoutArea>
              <LayoutGrid>
                {LAYOUTS.map((layout, i) => (
                  <LayoutButton key={layout.name} aria-label={layout.name} $selected={i === 0}>
                    <LayoutPreview {...layout} />
                  </LayoutButton>
                ))}
              </LayoutGrid>
              <Scrollbar before={1} thumb={275} after={133} />
            </LayoutArea>
            <PaneSection><Triangle />Animazione personalizzata</PaneSection>
            <PaneSection><Triangle />Cambio diapositiva</PaneSection>
          </PaneBody>
        </TaskPane>
      </Main>

      <ToolbarRow $height={30}>
        <Toolbar>
          <Grip />
          <Tools items="pointer:p | line arrow rect ellipse text | curve:v connector:v diamond:v smile:v block:v flow:v callout:v star:v | points glue | fontwork shapes picture | rotate align:v arrange:v | extrude interact" />
          <Overflow aria-label="Altro" />
        </Toolbar>
      </ToolbarRow>

      <StatusBar>
        <StatusCell $width={466} />
        <StatusCell $width={216}>
          <Icon name="posDim" />22,20 / 5,62<StatusGap /><Icon name="sizeDim" />0,00 x 0,00<StatusGap />
        </StatusCell>
        <StatusCell $width={44} $center>64%</StatusCell>
        <StatusCell $width={22} $center>*</StatusCell>
        <StatusCell $width={24} />
        <StatusCell $width={132}>Pagina 1 / 1</StatusCell>
        <StatusCell $width={330} $grow={1}>Standard</StatusCell>
      </StatusBar>

      <Taskbar>
        <StartButton><Icon name="windows" size={19} />start</StartButton>
        <QuickLaunch>
          <Icon name="ie" /><Icon name="outlook" /><Icon name="desktop" /><Icon name="messenger" /><Icon name="quicktime" />
          <More aria-label="Altro">»</More>
        </QuickLaunch>
        <Tasks>
          {TASKS.map(([icon, label]) => (
            <Task key={label} $active={icon === "impress"}><Icon name={icon} /><span>{label}</span></Task>
          ))}
        </Tasks>
        <Language>IT</Language>
        <TrayToggle aria-label="Mostra icone nascoste"><Icon name="trayArrow" /></TrayToggle>
        <Tray>
          <Icon name="network" /><Icon name="bTray" /><Icon name="aTray" />
          <Clock>17.22</Clock>
        </Tray>
      </Taskbar>
    </Window>
  )
}
